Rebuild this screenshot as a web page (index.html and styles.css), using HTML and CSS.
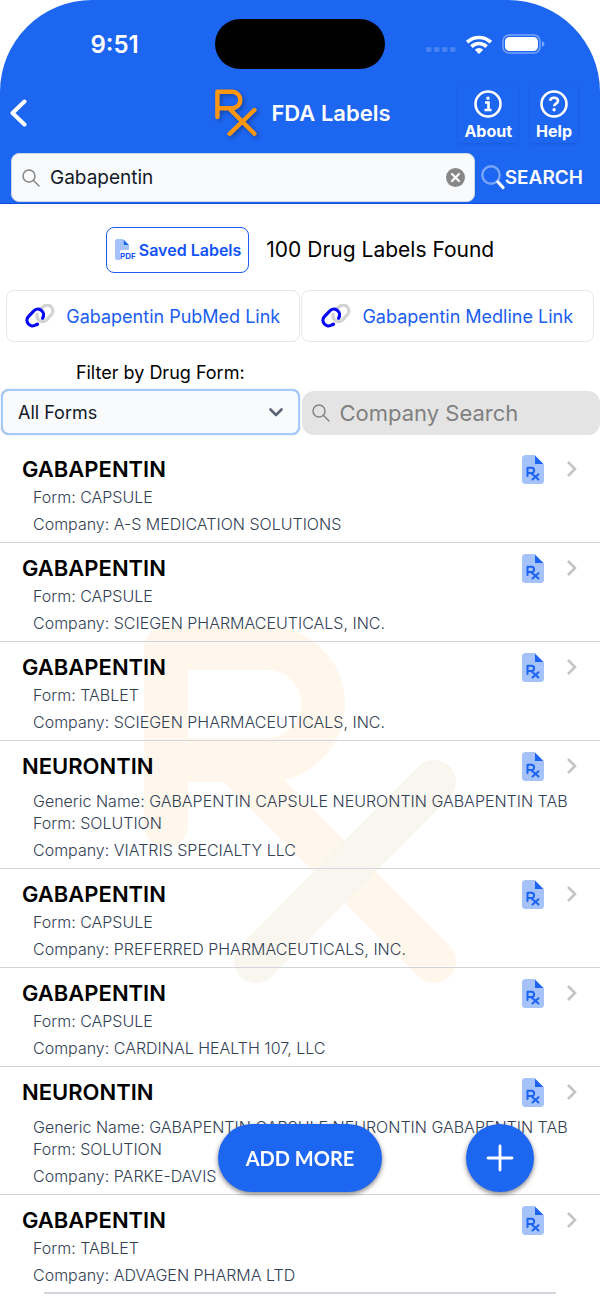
FILE: index.html
```html
<!DOCTYPE html>
<html lang="en">
<head>
    <meta charset="UTF-8">
    <meta name="viewport" content="width=device-width, initial-scale=1.0">
    <title>FDA Labels</title>
    <link rel="stylesheet" href="styles.css">
</head>
<body>
    <!-- Shared icons -->
    <svg class="sprite" aria-hidden="true">
        <symbol id="magnifier" viewBox="0 0 18 18"><circle cx="7" cy="7" r="6"/><path d="M11.3 11.3 17 17"/></symbol>
        <symbol id="chain" viewBox="0 0 30 24">
            <path d="M16 4.5 18 3a5.6 5.6 0 0 1 8.4 7.6l-5 5.4a5.6 5.6 0 0 1-9.2-5.6" stroke="#d3d3d3"/>
            <path d="M12.5 20.2 10.6 21a5.6 5.6 0 0 1-7.4-8.2l5-5.2a5.6 5.6 0 0 1 9.3 6.6" stroke="#0505f5"/>
        </symbol>
        <symbol id="rx-file" viewBox="0 0 22 29">
            <path d="M3.5 0H13v9h9v16.5a3.5 3.5 0 0 1-3.5 3.5h-15A3.5 3.5 0 0 1 0 25.5v-22A3.5 3.5 0 0 1 3.5 0z" fill="#a5c2fa"/>
            <path d="M13 .5 21.5 9H13z" fill="#1d64f2"/>
            <path d="M5.5 21v-8.2h4a2.5 2.5 0 0 1 0 5.2h-4M9 18l7.5 6.5M16.5 19.200l-6 5.300" fill="none" stroke="#1d64f2" stroke-width="2" stroke-linecap="round" stroke-linejoin="round"/>
        </symbol>
        <symbol id="next" viewBox="0 0 12 18"><path d="m2 2 7 7-7 7"/></symbol>
    </svg>

    <header class="header">
        <div class="status">
            <span class="time">9:51</span>
            <span class="island"></span>
            <span class="signals">
                <svg width="30" height="6" viewBox="0 0 30 6" fill="#4a85f6"><rect width="5.5" height="5" rx="2"/><rect x="8" width="5.5" height="5" rx="2"/><rect x="16" width="5.5" height="5" rx="2"/><rect x="24" width="5.5" height="5" rx="2"/></svg>
                <svg width="26" height="19" viewBox="0 0 26 19" fill="none" stroke="#fff" stroke-width="3.6"><path d="M1.2 7.2a17 17 0 0 1 23.600 0M5.4 11.600a11 11 0 0 1 15.2 0"/><path d="M13 19l-4.2-4.2a6 6 0 0 1 8.4 0z" fill="#fff" stroke="none"/></svg>
                <svg width="43" height="20" viewBox="0 0 43 20"><rect x="1" y="1" width="37" height="18" rx="6" fill="none" stroke="#78a5f9" stroke-width="1.5"/><rect x="3" y="3" width="33" height="14" rx="4.5" fill="#fff"/><path d="M40 7q2.500 1 2.500 3T40 13z" fill="#78a5f9"/></svg>
            </span>
        </div>

        <nav class="nav">
            <button class="back" aria-label="Back"><svg width="17" height="28" viewBox="0 0 17 28" fill="none" stroke="#fff" stroke-width="4" stroke-linecap="round" stroke-linejoin="round"><path d="M14.5 2.5 2.5 14l12 11.5"/></svg></button>
            <div class="brand">
                <svg class="logo" width="42" height="48" viewBox="0 0 42 48" fill="none" stroke="#fe9612" stroke-width="4.4" stroke-linecap="round" stroke-linejoin="round"><path d="M2.4 28V2.8h14.800a8.200 8.200 0 0 1 0 16.400H2.400M14 19.200l25.400 25.600M39.400 21 14.600 44.800"/></svg>
                <h1>FDA Labels</h1>
            </div>
            <div class="nav-buttons">
                <button><svg width="28" height="28" viewBox="0 0 28 28" fill="none" stroke="#fff" stroke-width="2.6"><circle cx="14" cy="14" r="12.5"/><path d="M11 12.5h3.5V20M10.5 20h7"/><circle cx="14" cy="8.300" r="1" fill="#fff" stroke-width="1.6"/></svg>About</button>
                <button><svg width="28" height="28" viewBox="0 0 28 28" fill="none" stroke="#fff" stroke-width="2.6"><circle cx="14" cy="14" r="12.5"/><path d="M10 10.800c.4-2 2-3 4-3 2.300 0 4 1.300 4 3.200 0 2.800-3.800 2.600-3.800 5.200"/><circle cx="14.1" cy="19.8" r="1" fill="#fff" stroke-width="1.4"/></svg>Help</button>
            </div>
        </nav>

        <form class="search">
            <label class="search-box">
                <svg class="line-icon" width="18" height="18"><use href="#magnifier"/></svg>
                <input type="text" value="Gabapentin" aria-label="Drug name">
                <button type="button" class="clear" aria-label="Clear"><svg width="19" height="19" viewBox="0 0 19 19"><circle cx="9.5" cy="9.5" r="9.5" fill="#878787"/><path d="m6 6 7 7M13 6l-7 7" stroke="#fff" stroke-width="2.2" stroke-linecap="round"/></svg></button>
            </label>
            <button type="button" class="search-button"><svg width="24" height="25" viewBox="0 0 24 25" fill="none" stroke-linecap="round"><circle cx="10" cy="10" r="8.7" stroke="#78a5f9" stroke-width="2.4"/><path d="m17 17 5 5.5" stroke="#fff" stroke-width="3.2"/></svg>SEARCH</button>
        </form>
    </header>

    <main>
        <div class="summary">
            <button class="saved"><svg width="20" height="22" viewBox="0 0 20 22"><path d="M2 0h6v6h6v5H6.500Q5 11 5 12.500V21H2q-2 0-2-2V2q0-2 2-2z" fill="#a5c2fa"/><path d="M8.500.500 14 6H8.500z" fill="#1d64f2"/><text x="5" y="20">PDF</text></svg>Saved Labels</button>
            <h2>100 Drug Labels Found</h2>
        </div>

        <div class="links">
            <a href="#pubmed"><svg width="30" height="24"><use href="#chain"/></svg>Gabapentin PubMed Link</a>
            <a href="#medline"><svg width="30" height="24"><use href="#chain"/></svg>Gabapentin Medline Link</a>
        </div>

        <div class="filters">
            <div class="form-filter">
                <label for="drugForm">Filter by Drug Form:</label>
                <div class="select-box">
                    <select id="drugForm">
                        <option>All Forms</option>
                        <option>Capsule</option>
                        <option>Tablet</option>
                        <option>Solution</option>
                    </select>
                    <svg class="arrow" width="14" height="9" viewBox="0 0 14 9" fill="none" stroke="#5b6475" stroke-width="2.6" stroke-linecap="round" stroke-linejoin="round"><path d="m1.5 1.5 5.5 5.5 5.5-5.5"/></svg>
                </div>
            </div>
            <label class="company-search">
                <svg class="line-icon" width="18" height="18"><use href="#magnifier"/></svg>
                <input type="text" placeholder="Company Search" aria-label="Company Search">
            </label>
        </div>

        <div class="results">
            <svg class="watermark" viewBox="0 0 314 359" fill="none" stroke-width="44" stroke-linecap="round" stroke-linejoin="round" aria-hidden="true">
                <path d="M23 200V23h101a56 56 0 0 1 0 112H23M90 135l201 201" stroke="#fff7ec"/>
                <path d="M291 157 113 336" stroke="#f9f6ef"/>
            </svg>
            <ul class="label-list">
                <li>
                    <div class="info">
                        <h3>GABAPENTIN</h3>
                        <p>Form: CAPSULE</p>
                        <p class="company">Company: A-S MEDICATION SOLUTIONS</p>
                    </div>
                    <svg class="rx-file" width="22" height="29"><use href="#rx-file"/></svg>
                    <svg class="next" width="12" height="18"><use href="#next"/></svg>
                </li>
                <li>
                    <div class="info">
                        <h3>GABAPENTIN</h3>
                        <p>Form: CAPSULE</p>
                        <p class="company">Company: SCIEGEN PHARMACEUTICALS, INC.</p>
                    </div>
                    <svg class="rx-file" width="22" height="29"><use href="#rx-file"/></svg>
                    <svg class="next" width="12" height="18"><use href="#next"/></svg>
                </li>
                <li>
                    <div class="info">
                        <h3>GABAPENTIN</h3>
                        <p>Form: TABLET</p>
                        <p class="company">Company: SCIEGEN PHARMACEUTICALS, INC.</p>
                    </div>
                    <svg class="rx-file" width="22" height="29"><use href="#rx-file"/></svg>
                    <svg class="next" width="12" height="18"><use href="#next"/></svg>
                </li>
                <li>
                    <div class="info">
                        <h3>NEURONTIN</h3>
                        <p class="generic">Generic Name: GABAPENTIN CAPSULE NEURONTIN GABAPENTIN TAB</p>
                        <p>Form: SOLUTION</p>
                        <p class="company">Company: VIATRIS SPECIALTY LLC</p>
                    </div>
                    <svg class="rx-file" width="22" height="29"><use href="#rx-file"/></svg>
                    <svg class="next" width="12" height="18"><use href="#next"/></svg>
                </li>
                <li>
                    <div class="info">
                        <h3>GABAPENTIN</h3>
                        <p>Form: CAPSULE</p>
                        <p class="company">Company: PREFERRED PHARMACEUTICALS, INC.</p>
                    </div>
                    <svg class="rx-file" width="22" height="29"><use href="#rx-file"/></svg>
                    <svg class="next" width="12" height="18"><use href="#next"/></svg>
                </li>
                <li>
                    <div class="info">
                        <h3>GABAPENTIN</h3>
                        <p>Form: CAPSULE</p>
                        <p class="company">Company: CARDINAL HEALTH 107, LLC</p>
                    </div>
                    <svg class="rx-file" width="22" height="29"><use href="#rx-file"/></svg>
                    <svg class="next" width="12" height="18"><use href="#next"/></svg>
                </li>
                <li>
                    <div class="info">
                        <h3>NEURONTIN</h3>
                        <p class="generic">Generic Name: GABAPENTIN CAPSULE NEURONTIN GABAPENTIN TAB</p>
                        <p>Form: SOLUTION</p>
                        <p class="company">Company: PARKE-DAVIS</p>
                    </div>
                    <svg class="rx-file" width="22" height="29"><use href="#rx-file"/></svg>
                    <svg class="next" width="12" height="18"><use href="#next"/></svg>
                </li>
                <li>
                    <div class="info">
                        <h3>GABAPENTIN</h3>
                        <p>Form: TABLET</p>
                        <p class="company">Company: ADVAGEN PHARMA LTD</p>
                    </div>
                    <svg class="rx-file" width="22" height="29"><use href="#rx-file"/></svg>
                    <svg class="next" width="12" height="18"><use href="#next"/></svg>
                </li>
            </ul>
        </div>
    </main>

    <!-- Floating buttons -->
    <button class="fab add-more">ADD MORE</button>
    <button class="fab add" aria-label="Add"><svg width="28" height="28" viewBox="0 0 28 28" stroke="#fff" stroke-width="2.8" stroke-linecap="round"><path d="M14 2v24M2 14h24"/></svg></button>
</body>
</html>
```
FILE: styles.css
```css
* { box-sizing: border-box; }
body { margin: 0; background: #fff; color: #000; font-family: Inter, "Liberation Sans", sans-serif; }
h1, h2, h3, p, ul { margin: 0; padding: 0; }
button, input, select { font-family: inherit; border: 0; padding: 0; background: none; }
button { cursor: pointer; }
svg { display: block; flex: none; }
.sprite { position: absolute; width: 0; height: 0; }
.line-icon { fill: none; stroke: #858585; stroke-width: 1.5; stroke-linecap: round; }

/* Header */
.header { background: #1d66f2; border-bottom: 1px solid #1450e0; border-radius: 92px 92px 0 0; color: #fff; }
.status { display: grid; grid-template-columns: 1fr 170px 1fr; align-items: center; padding-top: 19px; }
.time { padding-left: 14px; text-align: center; font-size: 24px; font-weight: 600; }
.island { height: 50px; border-radius: 25px; background: #000; }
.signals { display: flex; align-items: center; gap: 10px; padding-left: 41px; }
.signals svg:first-child { margin-top: 12px; }

.nav { display: grid; grid-template-columns: 1fr auto 1fr; align-items: center; height: 76px; margin-top: 6px; padding: 0 4px 0 10px; }
.back { width: 17px; }
.brand { display: flex; align-items: center; gap: 14px; }
.brand h1 { font-size: 22px; font-weight: 600; line-height: 28px; }
.logo { overflow: visible; filter: drop-shadow(2px 2px 2px rgba(0, 0, 0, 0.3)); }
.nav-buttons { display: flex; justify-content: flex-end; gap: 12px; padding-right: 18px; }
.nav-buttons button { display: flex; flex-direction: column; align-items: center; gap: 2px; padding: 6px 6px 1px; color: #fff; font-size: 16px; font-weight: 700; line-height: 22px; border-radius: 4px; box-shadow: 0 1px 3px rgba(0, 0, 0, 0.12); }

.search { display: flex; align-items: center; gap: 6px; padding: 2px 17px 1px 11px; }
.search-box { display: flex; align-items: center; flex: 1; min-width: 0; height: 49px; padding: 0 9px 0 10px; border: 1px solid #cfd6e4; border-radius: 8px; background: #f9fafb; }
.search-box input { flex: 1; min-width: 0; padding-left: 10px; color: #111827; font-size: 19px; font-weight: 400; outline: 0; }
.search-button { display: flex; align-items: center; color: #fff; font-size: 19px; font-weight: 600; }

/* Summary and links */
.summary { display: flex; justify-content: center; align-items: center; gap: 17px; padding-top: 23px; }
.saved { display: flex; align-items: center; gap: 4px; height: 46px; padding: 0 7px 0 8px; border: 1px solid #1d5cf0; border-radius: 8px; color: #1253f5; font-size: 16px; font-weight: 600; }
.saved svg { overflow: visible; }
.saved text { fill: #1253f5; font-size: 8px; font-weight: 700; }
.summary h2 { font-size: 21px; font-weight: 400; line-height: 28px; }
.links { display: grid; grid-template-columns: 1fr 1fr; gap: 1px; padding: 17px 6px 0; }
.links a { display: flex; justify-content: center; align-items: center; gap: 11px; height: 52px; border: 1px solid #e5e7eb; border-radius: 8px; color: #1a5df0; font-size: 18px; text-decoration: none; white-space: nowrap; }
.links svg { fill: none; stroke-width: 3.2; stroke-linecap: round; }

/* Filters */
.filters { display: grid; grid-template-columns: minmax(0, 1fr) minmax(0, 1fr); align-items: end; gap: 2px; padding: 19px 0 0 1px; }
.form-filter label { display: block; padding-left: 20px; text-align: center; font-size: 18px; line-height: 24px; }
.select-box { position: relative; margin-top: 4px; }
.select-box select { display: block; width: 100%; height: 46px; padding: 0 15px; appearance: none; border: 2px solid #a4cafe; border-radius: 8px; background: #f9fafb; box-shadow: 0 0 1px #7f8794; color: #111827; font-size: 18px; }
.arrow { position: absolute; right: 17px; top: 19px; pointer-events: none; }
.company-search { display: flex; align-items: center; height: 44px; padding: 0 12px 0 10px; border-radius: 12px; background: #e4e4e4; }
.company-search input { flex: 1; min-width: 0; padding-left: 10px; font-size: 22px; outline: 0; }
.company-search input::placeholder { color: #808080; }

/* Result list */
.results { position: relative; padding-top: 9px; }
.watermark { position: absolute; z-index: -1; top: 190px; left: 50%; width: 314px; transform: translateX(-50%); }
.label-list { list-style: none; }
.label-list li { display: flex; position: relative; padding: 11px 22px 7px; border-bottom: 1px solid #d1d5db; }
.info { flex: 1; width: 0; white-space: nowrap; }
.info h3 { font-size: 22px; font-weight: 600; line-height: 28px; }
.info p { margin-top: 3px; padding-left: 11px; color: #334155; font-size: 16px; font-weight: 300; line-height: 22px; }
.info .generic { margin-top: 10px; }
.info .generic + p { margin-top: 0; }
.info .company { margin-top: 5px; }
.next { margin: 5px 0 0 22px; fill: none; stroke: #c4c4c4; stroke-width: 2.6; }
.label-list li:last-child { border-color: transparent; }
.label-list li:last-child::after { content: ""; position: absolute; left: 44px; right: 44px; bottom: -1px; height: 2px; border-radius: 2px; background: #d1d5db; }

/* Floating buttons */
.fab { position: fixed; bottom: 112px; height: 68px; border-radius: 34px; background: #1d66f2; color: #fff; box-shadow: 0 2px 5px rgba(0, 0, 0, 0.5); }
.add-more { left: 50%; width: 164px; transform: translateX(-50%); font-family: Lato, sans-serif; font-size: 20px; font-weight: 700; }
.add { display: flex; justify-content: center; align-items: center; right: 66px; width: 68px; }
```
